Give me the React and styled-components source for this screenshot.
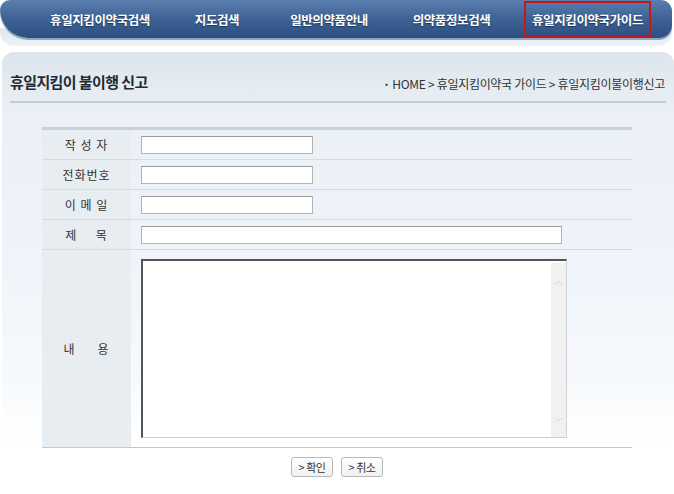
import React from "react";
import styled, { createGlobalStyle } from "styled-components";

const GlobalStyle = createGlobalStyle`
  html, body {
    margin: 0;
    padding: 0;
    background: #ffffff;
    font-family: "Noto Sans CJK KR", "Noto Sans", sans-serif;
  }
`;

const menus = [
  { id: 1, title: "휴일지킴이약국검색", width: 136 },
  { id: 2, title: "지도검색", width: 98 },
  { id: 3, title: "일반의약품안내", width: 126 },
  { id: 4, title: "의약품정보검색", width: 119 },
  { id: 5, title: "휴일지킴이약국가이드", width: 152, active: true },
];

const fields = [
  { id: 1, label: "작 성 자", wide: false },
  { id: 2, label: "전화번호", wide: false },
  { id: 3, label: "이 메 일", wide: false },
  { id: 4, label: "제\u00a0\u00a0\u00a0\u00a0\u00a0목", wide: true },
];

const App = () => {
  return (
    <Page>
      <GlobalStyle />
      <NavWrap>
        <Nav>
          {menus.map((item, i) => (
            <NavItem key={item.id} $width={item.width} $last={i === menus.length - 1}>
              {item.active ? <ActiveBox>{item.title}</ActiveBox> : item.title}
            </NavItem>
          ))}
        </Nav>
      </NavWrap>
      <Panel>
        <TitleRow>
          <Title>휴일지킴이 불이행 신고</Title>
          <Crumb>
            <Dot>·</Dot> HOME &gt; 휴일지킴이약국 가이드 &gt; 휴일지킴이불이행신고
          </Crumb>
        </TitleRow>
        <Form>
          {fields.map((f) => (
            <Row key={f.id}>
              <Label>{f.label}</Label>
              <Value>
                <Input $wide={f.wide} />
              </Value>
            </Row>
          ))}
          <Row $last>
            <Label>내&nbsp;&nbsp;&nbsp;&nbsp;&nbsp;&nbsp;용</Label>
            <Value $tall>
              <TextArea>
                <ScrollBar>
                  <Arrow>︿</Arrow>
                  <Arrow>﹀</Arrow>
                </ScrollBar>
              </TextArea>
            </Value>
          </Row>
        </Form>
        <Buttons>
          <Btn>&gt; 확인</Btn>
          <Btn>&gt; 취소</Btn>
        </Buttons>
      </Panel>
    </Page>
  );
};

export default App;

const Page = styled.div`
  width: 674px;
  height: 494px;
  overflow: hidden;
  background: #ffffff;
`;
const NavWrap = styled.div`
  padding-bottom: 8px;
  background: linear-gradient(180deg, #ffffff 0%, #ffffff 60%, #dfe7ef 61%, #eef2f6 100%);
  border-radius: 0 0 14px 14px;
  margin: 0 2px 0 0;
`;
const Nav = styled.div`
  height: 38px;
  display: flex;
  align-items: center;
  padding-left: 32px;
  background: linear-gradient(180deg, #5b7fae 0%, #3f6496 45%, #2c4f80 100%);
  border-radius: 14px 16px 18px 40px;
  box-shadow: 0 2px 0 #8fa6c2;
`;
const NavItem = styled.div`
  width: ${(p) => p.$width}px;
  height: 38px;
  display: flex;
  align-items: center;
  justify-content: center;
  position: relative;
  color: #ffffff;
  font-size: 12.5px;
  font-weight: 700;
  letter-spacing: -0.4px;
  text-shadow: 0 1px 1px #1d3558;
  :after {
    content: "";
    display: ${(p) => (p.$last ? "none" : "block")};
    position: absolute;
    right: 0;
    top: 12px;
    width: 1px;
    height: 15px;
    background: #dce6f2;
  }
`;
const ActiveBox = styled.div`
  width: 123px;
  height: 32px;
  border: 2px solid #c8161d;
  display: flex;
  align-items: center;
  justify-content: center;
  margin-left: 1px;
`;
const Panel = styled.div`
  margin: 6px 0 0 2px;
  border-radius: 12px 12px 0 0;
  background: linear-gradient(180deg, #dde5ec 0px, #eaf0f5 60px, #eef4fa 200px, #f7fafd 330px, #ffffff 390px);
  height: 442px;
  padding: 0 8px;
`;
const TitleRow = styled.div`
  height: 51px;
  display: flex;
  align-items: flex-end;
  justify-content: space-between;
  padding: 0 0 9px 0;
  box-sizing: border-box;
  border-bottom: 2px solid #c5ced6;
`;
const Title = styled.div`
  font-size: 15px;
  font-weight: 700;
  color: #1f2a36;
  letter-spacing: -0.6px;
`;
const Crumb = styled.div`
  font-size: 12px;
  color: #333;
  letter-spacing: -0.3px;
  padding-right: 1px;
`;
const Dot = styled.span`
  font-weight: 700;
`;
const Form = styled.div`
  margin: 24px 0 0 32px;
  width: 590px;
  border-top: 3px solid #c9d2da;
`;
const Row = styled.div`
  display: flex;
  border-bottom: 1px solid ${(p) => (p.$last ? "#c4c8cc" : "#d5dadf")};
`;
const Label = styled.div`
  width: 89px;
  flex-shrink: 0;
  background: #e8edf2;
  display: flex;
  align-items: center;
  justify-content: center;
  font-size: 12px;
  color: #333;
  letter-spacing: 1px;
`;
const Value = styled.div`
  flex: 1;
  height: ${(p) => (p.$tall ? "197px" : "29px")};
  display: flex;
  align-items: ${(p) => (p.$tall ? "flex-start" : "center")};
  padding: ${(p) => (p.$tall ? "9px 0 0 10px" : "0 0 0 10px")};
  box-sizing: border-box;
`;
const Input = styled.div`
  width: ${(p) => (p.$wide ? "421px" : "172px")};
  height: 18px;
  box-sizing: border-box;
  background: #ffffff;
  border: 1px solid #b4b4b4;
  border-top-color: #9a9a9a;
`;
const TextArea = styled.div`
  width: 426px;
  height: 179px;
  box-sizing: border-box;
  background: #ffffff;
  border-top: 2px solid #555;
  border-left: 2px solid #555;
  border-right: 1px solid #d0d0d0;
  border-bottom: 1px solid #d0d0d0;
  display: flex;
  justify-content: flex-end;
  padding: 2px 0 0 0;
`;
const ScrollBar = styled.div`
  width: 15px;
  background: #f1f1f1;
  display: flex;
  flex-direction: column;
  justify-content: space-between;
  align-items: center;
  padding: 12px 0 10px;
  box-sizing: border-box;
`;
const Arrow = styled.span`
  font-size: 10px;
  color: #d8d8d8;
  line-height: 10px;
`;
const Buttons = styled.div`
  display: flex;
  justify-content: center;
  gap: 8px;
  margin: 9px 0 0 -2px;
`;
const Btn = styled.div`
  width: 42px;
  height: 20px;
  box-sizing: border-box;
  border: 1px solid #b8b8b8;
  border-radius: 3px;
  background: linear-gradient(180deg, #ffffff, #f0f0f0);
  font-size: 11px;
  color: #333;
  display: flex;
  align-items: center;
  justify-content: center;
  letter-spacing: -0.5px;
`;
